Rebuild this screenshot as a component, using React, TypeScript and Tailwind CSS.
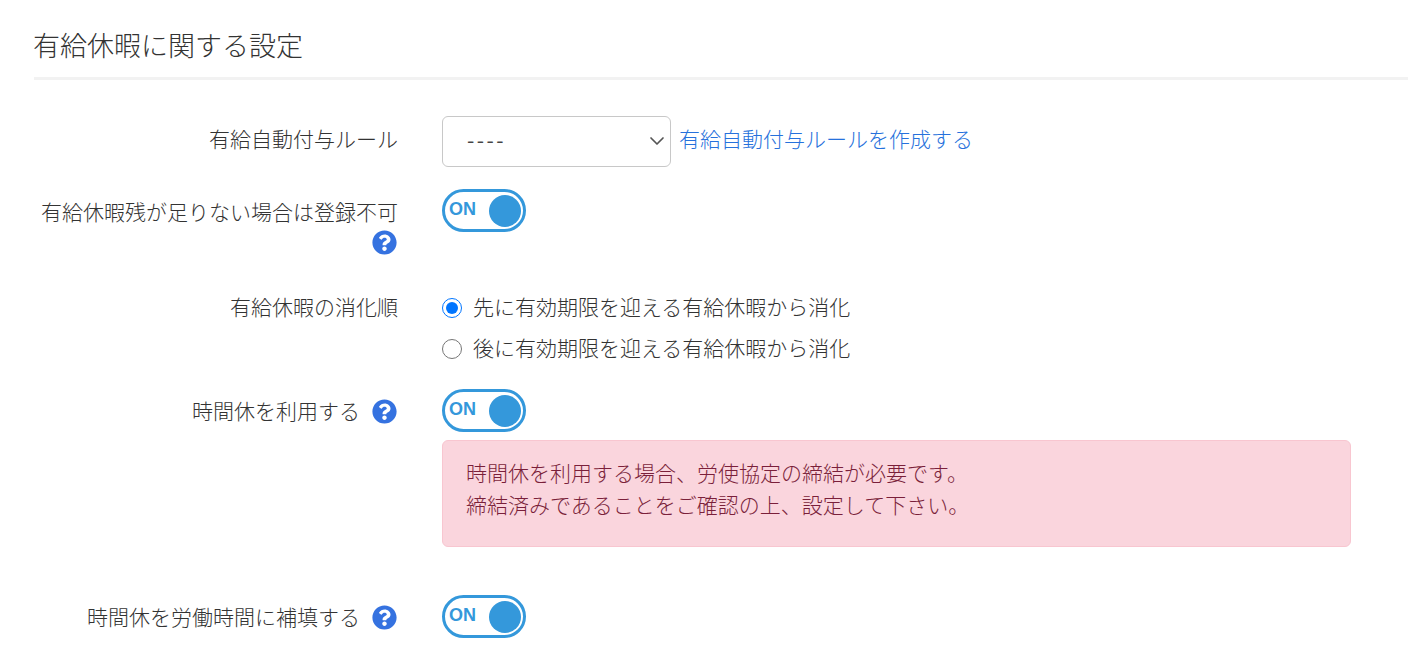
import React from 'react';
import { FaQuestionCircle } from 'react-icons/fa';
import { ChevronDown } from 'lucide-react';

const font = { fontFamily: '"Noto Sans CJK JP", "Noto Sans", sans-serif' };

function Toggle() {
  return (
    <div className="flex h-[43px] w-[84px] items-center justify-between rounded-full border-[3px] border-[#3498db] bg-white pl-[4px] pr-[2px]">
      <span className="mb-[3px] font-['Liberation_Sans',sans-serif] text-[18px] font-bold text-[#3498db]">ON</span>
      <span className="h-[32px] w-[32px] rounded-full bg-[#3498db]" />
    </div>
  );
}

function Help() {
  return <FaQuestionCircle className="inline-block h-[25px] w-[25px] text-[#3572e0]" />;
}

export default function App() {
  return (
    <div className="h-[652px] w-full overflow-hidden bg-white text-[21px] font-light text-[#333]" style={font}>
      <div className="pl-[34px]">
        <h2 className="h-[80px] border-b-[3px] border-[#f2f2f2] pt-[24px] text-[27px] leading-[42px] font-light">
          <span className="-ml-[1px] block">有給休暇に関する設定</span>
        </h2>

        <div className="mt-[36px] grid grid-cols-[364px_1fr] gap-x-[44px]">
          <div className="flex h-[45px] items-center justify-end">有給自動付与ルール</div>
          <div className="flex h-[51px] items-center gap-[8px]">
            <div className="relative">
              <select className="h-[51px] w-[229px] appearance-none rounded-[6px] border border-[#c8c8c8] bg-white pb-[3px] pl-[24px] text-[21px] font-normal tracking-[2.5px] text-[#444]">
                <option>----</option>
              </select>
              <ChevronDown className="pointer-events-none absolute right-[2px] top-[13px] h-[24px] w-[24px] text-[#555]" strokeWidth={1.7} />
            </div>
            <a className="mb-[5px] text-[#2671dc]">有給自動付与ルールを作成する</a>
          </div>

          <div className="mt-[22px] text-right leading-[30px]">
            <div className="pt-[7px]">有給休暇残が足りない場合は登録不可</div>
            <div className="mt-[4px] flex justify-end pr-[1px]"><Help /></div>
          </div>
          <div className="mt-[22px]"><Toggle /></div>

          <div className="mt-[36px] text-right leading-[30px]">有給休暇の消化順</div>
          <div className="mt-[36px] flex flex-col gap-[11px] leading-[30px]">
            <label className="flex items-center gap-[11px]">
              <input type="radio" name="order" defaultChecked className="m-0 mt-[3px] h-[20px] w-[20px]" />
              先に有効期限を迎える有給休暇から消化
            </label>
            <label className="flex items-center gap-[11px]">
              <input type="radio" name="order" className="m-0 mt-[3px] h-[20px] w-[20px]" />
              後に有効期限を迎える有給休暇から消化
            </label>
          </div>

          <div className="mt-[27px] flex h-[44px] items-center justify-end gap-[12px] pr-[1px]">時間休を利用する <Help /></div>
          <div className="mt-[27px]">
            <Toggle />
            <div className="mt-[8px] h-[107px] w-[909px] rounded-[6px] border border-[#f8c6d0] bg-[#fad5dd] px-[23px] pt-[15px] leading-[32px] text-[#7a1f3a]">
              時間休を利用する場合、労使協定の締結が必要です。<br />
              締結済みであることをご確認の上、設定して下さい。
            </div>
          </div>

          <div className="mt-[48px] flex h-[44px] items-center justify-end gap-[12px] pr-[1px]">時間休を労働時間に補填する <Help /></div>
          <div className="mt-[48px]"><Toggle /></div>
        </div>
      </div>
    </div>
  );
}
